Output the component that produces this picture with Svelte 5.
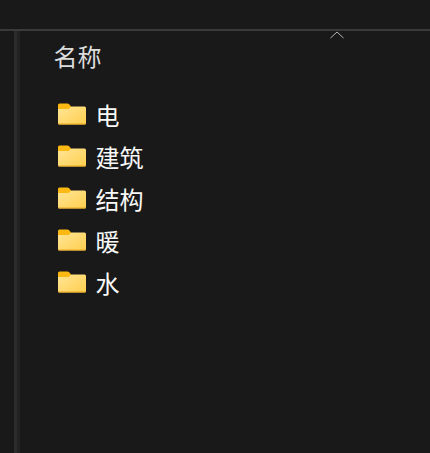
<script>
    let folders = ["电", "建筑", "结构", "暖", "水"]
</script>

<div class="window">
    <div class="toolbar"></div>
    <div class="body">
        <div class="gutter"></div>
        <div class="splitter"></div>
        <div class="list">
            <div class="head">
                <span class="title">名称</span>
                <svg class="sort" width="14" height="8" viewBox="0 0 14 8">
                    <path d="M0.5 7 L7 1 L13.5 7" fill="none" stroke="#b5b5b5" stroke-width="1"/>
                </svg>
            </div>
            <div class="rows">
                {#each folders as name}
                    <div class="row">
                        <svg class="folder" width="28" height="22" viewBox="0 0 28 22">
                            <defs>
                                <linearGradient id="face" x1="0" y1="0" x2="1" y2="1">
                                    <stop offset="0" stop-color="#ffe596"/>
                                    <stop offset="1" stop-color="#ffcf4f"/>
                                </linearGradient>
                            </defs>
                            <path d="M0 2 a1.5 1.5 0 0 1 1.5-1.5 h8 a2 2 0 0 1 1.4 .6 L13.5 4 V8 H0 Z" fill="#fdb913"/>
                            <path d="M0 6 H10.5 L13.5 3.5 H26.5 a1.5 1.5 0 0 1 1.5 1.5 V20 a1.5 1.5 0 0 1-1.5 1.5 H1.5 a1.5 1.5 0 0 1-1.5-1.5 Z" fill="url(#face)"/>
                            <path d="M0.5 21 H27.5" stroke="#e8a820" stroke-width="1"/>
                        </svg>
                        <span>{name}</span>
                    </div>
                {/each}
            </div>
        </div>
    </div>
</div>

<style>
    :global(body) {
        margin: 0;
        background: #191919;
    }

    .window {
        width: 430px;
        height: 453px;
        background: #191919;
        display: flex;
        flex-direction: column;
        overflow: hidden;
        font-family: "Noto Sans CJK SC", "Noto Sans", sans-serif;
    }

    .toolbar {
        height: 29px;
        flex: none;
        border-bottom: 2px solid #3a3a3a;
        box-sizing: content-box;
    }

    .body {
        flex: 1;
        display: flex;
    }

    .gutter {
        width: 14px;
        flex: none;
    }

    .splitter {
        width: 6px;
        flex: none;
        background: linear-gradient(to right, #2c2c2c 50%, #222222 50%);
    }

    .list {
        flex: 1;
        padding-left: 34px;
    }

    .head {
        position: relative;
        height: 53px;
        padding-top: 7px;
        box-sizing: border-box;
        font-size: 24px;
        line-height: 36px;
        color: #dcdcdc;
    }

    .title {
        margin-left: -0.5px;
    }

    .sort {
        position: absolute;
        left: 276px;
        top: 0;
    }

    .rows {
        display: flex;
        flex-direction: column;
        padding-left: 4px;
        margin-top: 11px;
    }

    .row {
        height: 42px;
        display: flex;
        align-items: center;
        gap: 10px;
        font-size: 24px;
        color: #f8f8f8;
    }

    .row span {
        margin-top: -4px;
        margin-left: -0.5px;
    }

    .folder {
        margin-top: -5px;
    }
</style>
